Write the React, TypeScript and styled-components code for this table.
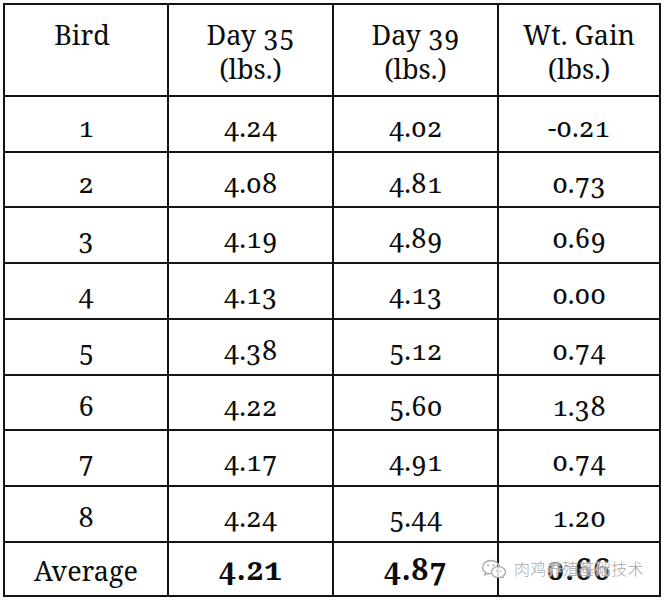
import React from "react";
import styled, { createGlobalStyle } from "styled-components";

const GlobalStyle = createGlobalStyle`
  html, body { margin: 0; padding: 0; background: #ffffff; }
  body { font-family: "Noto Serif", "DejaVu Serif", serif; }
`;

const Page = styled.div`
  position: relative;
  width: 665px;
  height: 600px;
  padding: 3px 0 0 3px;
  box-sizing: border-box;
`;

const Grid = styled.div`
  display: grid;
  width: 658px;
  box-sizing: border-box;
  grid-template-columns: 162px 163px 163px 160px;
  grid-template-rows: 90px 54px 53px 54px 54px 54px 53px 54px 54px 52px;
  gap: 2px;
  padding: 2px;
  background: #141414;
`;

const Cell = styled.div<{ $head?: boolean; $avg?: boolean; $bold?: boolean; $shift?: number }>`
  background: #ffffff;
  display: flex;
  flex-direction: column;
  align-items: center;
  justify-content: flex-start;
  padding-top: ${(p) => (p.$head ? "13px" : p.$bold ? "9px" : p.$avg ? "11px" : "13px")};
  padding-right: ${(p) => p.$shift ?? 0}px;
  box-sizing: border-box;
  font-family: "Noto Serif", "DejaVu Serif", serif;
  font-size: ${(p) => (p.$bold ? "30px" : "27px")};
  line-height: 34px;
  font-weight: ${(p) => (p.$bold ? 700 : 400)};
  letter-spacing: ${(p) => (p.$bold ? "0.6px" : "0")};
  font-variant-numeric: oldstyle-nums;
  color: #0c0c0c;
  text-align: center;
  white-space: nowrap;
`;

const Watermark = styled.div`
  position: absolute;
  left: 481px;
  top: 558px;
  display: flex;
  align-items: center;
  gap: 6px;
`;

const WatermarkText = styled.span`
  font-family: "Noto Sans CJK SC", "Noto Sans", sans-serif;
  font-size: 16px;
  line-height: 20px;
  font-weight: 300;
  color: rgba(155, 155, 155, 0.9);
  text-shadow: 0 0 1px #fff, 0 0 2px #fff, 0 0 3px rgba(255, 255, 255, 0.9);
  letter-spacing: 0.2px;
`;

const WeChatIcon = () => (
  <svg width="27" height="19" viewBox="0 0 27 19" fill="none">
    <g stroke="#a8a8a8" strokeWidth="1.3" fill="rgba(255,255,255,0.85)">
      <path d="M10 1.5c-4.7 0-8.5 3-8.5 6.7 0 2.1 1.2 3.9 3.1 5.1l-.8 2.6 3-1.6c1 .3 2.1.5 3.2.5" />
      <path d="M10 1.5c4.3 0 7.9 2.6 8.4 5.9" />
      <path d="M17.5 7.6c-3.9 0-7 2.5-7 5.5s3.1 5.5 7 5.5c.9 0 1.7-.1 2.5-.4l2.4 1.2-.6-2.1c1.6-1 2.7-2.5 2.7-4.2 0-3-3.1-5.5-7-5.5z" />
    </g>
    <g fill="#a8a8a8">
      <circle cx="7" cy="6.2" r="1" />
      <circle cx="12.6" cy="6.2" r="1" />
      <circle cx="15.3" cy="12" r="0.8" />
      <circle cx="19.6" cy="12" r="0.8" />
    </g>
  </svg>
);

const headers: string[][] = [
  ["Bird"],
  ["Day 35", "(lbs.)"],
  ["Day 39", "(lbs.)"],
  ["Wt. Gain", "(lbs.)"],
];

const rows: string[][] = [
  ["1", "4.24", "4.02", "-0.21"],
  ["2", "4.08", "4.81", "0.73"],
  ["3", "4.19", "4.89", "0.69"],
  ["4", "4.13", "4.13", "0.00"],
  ["5", "4.38", "5.12", "0.74"],
  ["6", "4.22", "5.60", "1.38"],
  ["7", "4.17", "4.91", "0.74"],
  ["8", "4.24", "5.44", "1.20"],
];

const average = ["Average", "4.21", "4.87", "0.66"];

export default function App() {
  return (
    <>
      <GlobalStyle />
      <Page>
        <Grid>
          {headers.map((h, i) => (
            <Cell key={`h${i}`} $head $shift={i === 0 ? 8 : 0}>
              {h.map((line) => (
                <span key={line}>{line}</span>
              ))}
            </Cell>
          ))}
          {rows.map((r, ri) =>
            r.map((v, ci) => <Cell key={`r${ri}c${ci}`}>{v}</Cell>)
          )}
          {average.map((v, ci) => (
            <Cell key={`a${ci}`} $avg $bold={ci > 0}>
              {v}
            </Cell>
          ))}
        </Grid>
        <Watermark>
          <WeChatIcon />
          <WatermarkText>肉鸡养殖基础技术</WatermarkText>
        </Watermark>
      </Page>
    </>
  );
}
